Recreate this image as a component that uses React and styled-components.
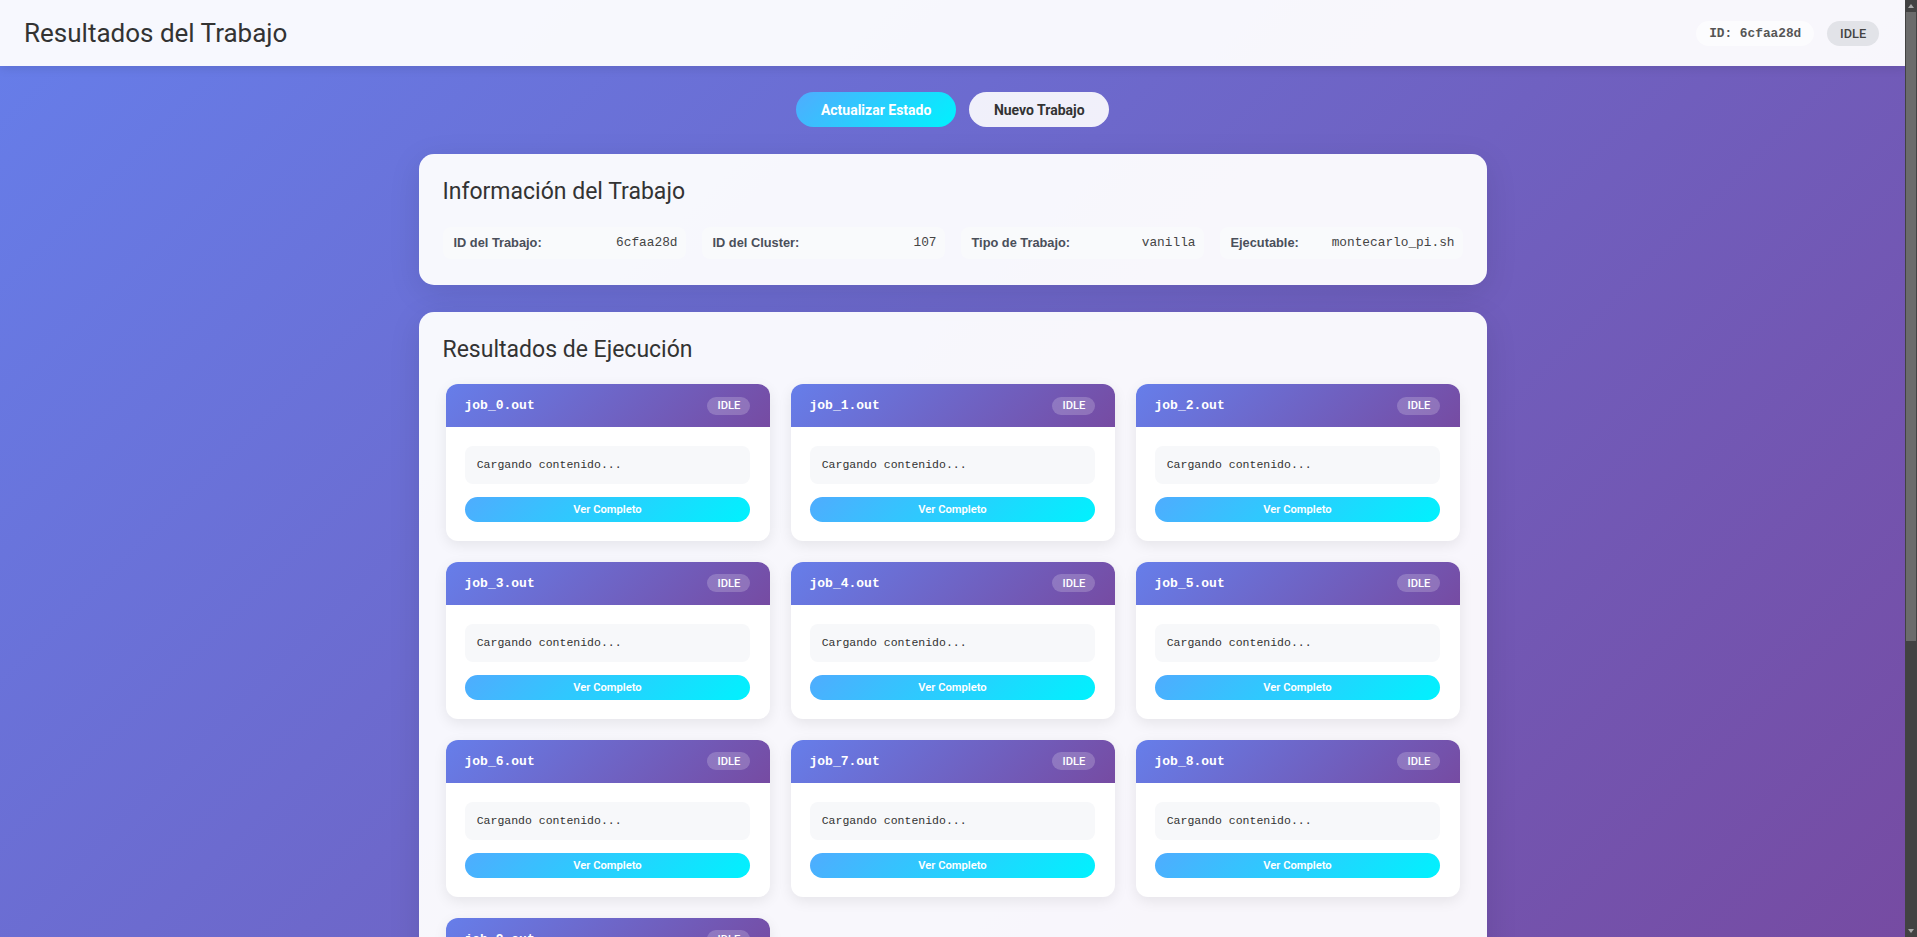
import React from "react";
import styled, { createGlobalStyle } from "styled-components";

const GlobalStyle = createGlobalStyle`
  * { box-sizing: border-box; }
  html, body { margin: 0; padding: 0; }
  body {
    font-family: Roboto, "Liberation Sans", Arial, sans-serif;
    background: linear-gradient(135deg, #667eea 0%, #764ba2 100%);
    background-attachment: fixed;
    min-height: 100vh;
    color: #333;
  }
`;

const mono = `"Liberation Mono", "Courier New", monospace`;

const Page = styled.div`
  margin-right: 12px;
`;

/* Browser scrollbar drawn over the right edge */
const ScrollRail = styled.div`
  position: fixed;
  top: 0;
  right: 0;
  width: 12px;
  height: 100vh;
  display: flex;
  flex-direction: column;
  background: #424242;
  z-index: 10;
`;

const RailButton = styled.div`
  height: 12px;
  flex: none;
  display: flex;
  align-items: center;
  justify-content: center;
  &::before {
    content: "";
    width: 0;
    height: 0;
    border-left: 3.5px solid transparent;
    border-right: 3.5px solid transparent;
    ${(p) =>
      p.$down
        ? "border-top: 4px solid #a8a8a8;"
        : "border-bottom: 4px solid #a8a8a8;"}
  }
`;

const RailThumb = styled.div`
  height: 629px;
  flex: none;
  margin: 0 1px;
  background: #6b6b6b;
`;

const RailTrack = styled.div`
  flex: 1;
`;

const Header = styled.header`
  display: flex;
  align-items: center;
  justify-content: space-between;
  height: 66px;
  padding: 0 24px;
  background: rgba(255, 255, 255, 0.95);
  box-shadow: 0 2px 10px rgba(0, 0, 0, 0.1);
`;

const HeaderTitle = styled.h1`
  margin: 0;
  font-size: 26px;
  font-weight: 400;
  color: #333;
`;

const HeaderRight = styled.div`
  display: flex;
  align-items: center;
  gap: 13px;
  margin-right: 2px;
`;

const IdPill = styled.span`
  font-family: ${mono};
  font-weight: 700;
  font-size: 12.8px;
  color: #555;
  background: rgba(255, 255, 255, 0.6);
  padding: 5px 13px;
  border-radius: 14px;
`;

const StatusBadge = styled.span`
  font-size: 12.8px;
  font-weight: 500;
  color: #444;
  background: #e2e3e8;
  padding: 5px 12.8px;
  border-radius: 14px;
  line-height: 15px;
`;

const Container = styled.main`
  max-width: 1100px;
  margin: 0 auto;
  padding: 26px 16px 258px;
`;

const Actions = styled.div`
  display: flex;
  justify-content: center;
  gap: 13px;
  margin-bottom: 27px;
`;

const Button = styled.button`
  font-family: Roboto, "Liberation Sans", Arial, sans-serif;
  font-size: 14px;
  font-weight: 700;
  height: 35px;
  padding: 0 ${(p) => (p.$primary ? "25px" : "24.5px")};
  border: none;
  border-radius: 20px;
  cursor: pointer;
  color: ${(p) => (p.$primary ? "#fff" : "#333")};
  background: ${(p) =>
    p.$primary
      ? "linear-gradient(135deg, #4facfe 0%, #00f2fe 100%)"
      : "rgba(255, 255, 255, 0.9)"};
`;

const Card = styled.section`
  background: rgba(255, 255, 255, 0.95);
  border-radius: 15px;
  padding: 24px 24px ${(p) => p.$bottom || "24px"};
  margin-bottom: 27px;
  box-shadow: 0 8px 32px rgba(0, 0, 0, 0.1);
`;

const CardTitle = styled.h2`
  margin: 0 0 21.5px;
  font-size: 23px;
  font-weight: 400;
  color: #333;
`;

const InfoGrid = styled.div`
  display: grid;
  grid-template-columns: repeat(4, 1fr);
  gap: 16px;
`;

const InfoItem = styled.div`
  display: flex;
  align-items: center;
  justify-content: space-between;
  padding: 8px 8px 8px 11px;
  height: 32px;
  background: #f9fafc;
  border-radius: 8px;
`;

const InfoLabel = styled.span`
  font-family: "Liberation Sans", Arial, sans-serif;
  font-size: 12.8px;
  font-weight: 700;
  color: #4a4f5a;
`;

const InfoValue = styled.span`
  font-family: ${mono};
  font-size: 12.8px;
  color: #444;
`;

const JobGrid = styled.div`
  display: grid;
  grid-template-columns: repeat(3, 1fr);
  gap: 21px;
  padding: 0 3px;
`;

const JobCard = styled.div`
  background: #fff;
  border-radius: 12px;
  overflow: hidden;
  box-shadow: 0 4px 14px rgba(0, 0, 0, 0.08);
`;

const JobHeader = styled.div`
  display: flex;
  align-items: center;
  justify-content: space-between;
  height: 43px;
  padding: 0 19.2px 0 19px;
  background: linear-gradient(135deg, #667eea 0%, #764ba2 100%);
  color: #fff;
`;

const JobName = styled.span`
  font-family: ${mono};
  font-weight: 700;
  font-size: 13px;
`;

const JobBadge = styled.span`
  font-size: 11.2px;
  font-weight: 500;
  line-height: 13px;
  padding: 2.5px 10px;
  border-radius: 10px;
  background: rgba(255, 255, 255, 0.2);
  color: #fff;
`;

const JobBody = styled.div`
  display: flex;
  flex-direction: column;
  gap: 13px;
  padding: 19.2px;
`;

const Preview = styled.div`
  font-family: ${mono};
  font-size: 11.5px;
  line-height: 13.6px;
  padding: 12px;
  color: #333;
  background: #f7f8fa;
  border-radius: 8px;
`;

const ViewButton = styled.button`
  font-family: Roboto, "Liberation Sans", Arial, sans-serif;
  font-size: 11.2px;
  font-weight: 600;
  height: 25px;
  border: none;
  border-radius: 13px;
  color: #fff;
  cursor: pointer;
  background: linear-gradient(135deg, #4facfe 0%, #00f2fe 100%);
`;

const info = [
  ["ID del Trabajo:", "6cfaa28d"],
  ["ID del Cluster:", "107"],
  ["Tipo de Trabajo:", "vanilla"],
  ["Ejecutable:", "montecarlo_pi.sh"],
];

const jobs = Array.from({ length: 10 }, (_, i) => `job_${i}.out`);

export default function App() {
  return (
    <>
      <GlobalStyle />
      <Page>
        <Header>
          <HeaderTitle>Resultados del Trabajo</HeaderTitle>
          <HeaderRight>
            <IdPill>ID: 6cfaa28d</IdPill>
            <StatusBadge>IDLE</StatusBadge>
          </HeaderRight>
        </Header>
        <Container>
          <Actions>
            <Button $primary>Actualizar Estado</Button>
            <Button>Nuevo Trabajo</Button>
          </Actions>
          <Card $bottom="26px">
            <CardTitle>Información del Trabajo</CardTitle>
            <InfoGrid>
              {info.map(([l, v]) => (
                <InfoItem key={l}>
                  <InfoLabel>{l}</InfoLabel>
                  <InfoValue>{v}</InfoValue>
                </InfoItem>
              ))}
            </InfoGrid>
          </Card>
          <Card>
            <CardTitle>Resultados de Ejecución</CardTitle>
            <JobGrid>
              {jobs.map((j) => (
                <JobCard key={j}>
                  <JobHeader>
                    <JobName>{j}</JobName>
                    <JobBadge>IDLE</JobBadge>
                  </JobHeader>
                  <JobBody>
                    <Preview>Cargando contenido...</Preview>
                    <ViewButton>Ver Completo</ViewButton>
                  </JobBody>
                </JobCard>
              ))}
            </JobGrid>
          </Card>
        </Container>
      </Page>
      <ScrollRail aria-hidden="true">
        <RailButton />
        <RailThumb />
        <RailTrack />
        <RailButton $down />
      </ScrollRail>
    </>
  );
}
